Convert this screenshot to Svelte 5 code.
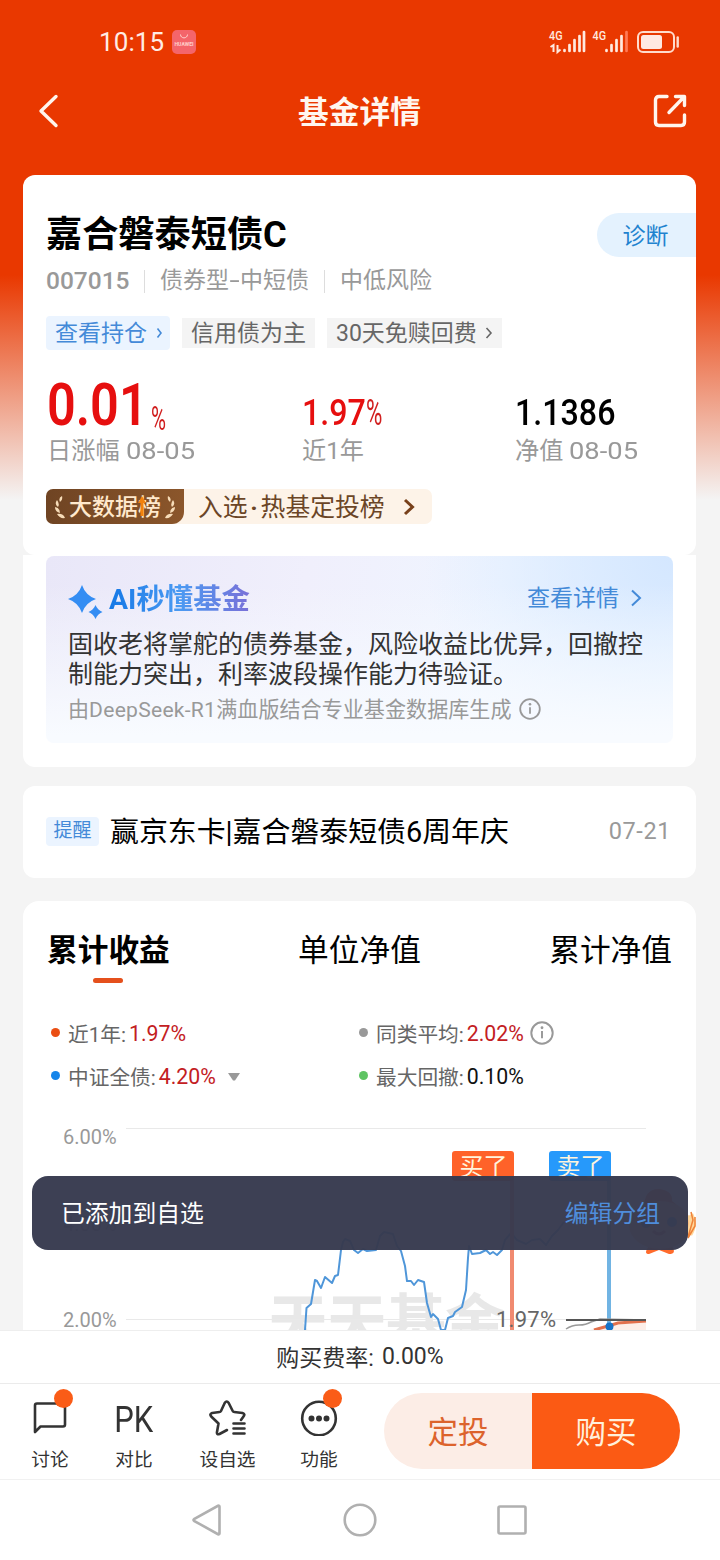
<script lang="ts">
  const tabs = ['累计收益', '单位净值', '累计净值'];
  let activeTab = $state(0);

  const legend = [
    { color: '#ea4e13', label: '近1年:', value: '1.97%', up: true },
    { color: '#999', label: '同类平均:', value: '2.02%', up: true, info: true },
    { color: '#1585ea', label: '中证全债:', value: '4.20%', up: true, more: true },
    { color: '#5fc463', label: '最大回撤:', value: '0.10%' }
  ];

  const bondIndex =
    '305,1330 306.5,1308 311,1304 313,1292 315,1280 317,1281 321,1288 325,1277 332,1283 335,1276 338,1275 341,1250 343,1242 345,1239 350,1241 354,1250 358,1253 363,1249 367,1251 376,1250 380,1236 384,1232 393,1234 397,1246 401,1251 405,1266 407,1281 411,1281 414,1285 418,1280 424,1282 427,1303 431,1317 433,1314 438,1319 441,1330 445,1330 448,1318 453,1316 455,1312 462,1307 466,1290 468,1258 469,1246 472,1254 480,1253 486,1250 490,1254 493,1252 497,1255 502,1250 505,1240 511,1233 517,1240 526,1244 532,1240 540,1239 546,1245 552,1236 558,1230 564,1222';
</script>

{#snippet info(size: number)}
  <svg class="info" width={size} height={size} viewBox="0 0 22 22">
    <circle cx="11" cy="11" r="9.8" />
    <path d="M11 9.2v6.6" />
    <circle class="tip" cx="11" cy="6.2" r="1.3" />
  </svg>
{/snippet}

<main>
  <div class="scroll">
    <header>
      <div class="status">
        <span class="time">10:15</span>
        <svg class="app" width="24" height="24" viewBox="0 0 24 24">
          <rect width="24" height="24" rx="5" fill="#f4656b" />
          <path d="M8.5 4.5c0 4.5 7 4.5 7 0" fill="none" stroke="#ffd0cc" stroke-width="1" />
          <text x="12" y="15.5" text-anchor="middle" textLength="19" lengthAdjust="spacingAndGlyphs">HUAWEI</text>
        </svg>
        <svg class="signal" width="132" height="28" viewBox="548 28 132 28">
          <g stroke="#ffe9df" stroke-width="2.7" stroke-linecap="round">
            <path d="M564.5 50v1M569.5 45v6M574.5 40v11M579.5 36v15M584 32v19" />
            <path d="M606.5 50v1M611.5 45v6M616.5 40v11M621.5 36v15" />
            <path d="M626.5 32v19" stroke="#ff7a55" />
          </g>
          <text x="549" y="40" textLength="13.5" lengthAdjust="spacingAndGlyphs">4G</text>
          <text x="592.5" y="40" textLength="13.5" lengthAdjust="spacingAndGlyphs">4G</text>
          <path d="M550.5 47l3-2v7M557.5 45v7l3-2.5" fill="none" stroke="#ffe9df" stroke-width="2" />
          <rect x="638" y="32" width="36" height="20" rx="5" fill="none" stroke="#ffdccc" stroke-width="2" />
          <rect x="641" y="35" width="21" height="14" rx="2.5" fill="#ffe9e2" />
          <path d="M677.7 37.5v9" stroke="#ffdccc" stroke-width="2.4" stroke-linecap="round" />
        </svg>
      </div>
      <div class="titlebar">
        <svg width="40" height="40" viewBox="0 0 40 40">
          <path d="M28 4.500L13 19l15 14.500" />
        </svg>
        <h1>基金详情</h1>
        <svg width="40" height="40" viewBox="0 0 40 40">
          <path d="M17 4.500H9Q5.500 4.500 5.500 8v22q0 3.500 3.500 3.500h22q3.500 0 3.500-3.500v-7M19 20.500L34 5M25.500 4.500h9v9" />
        </svg>
      </div>
    </header>

    <section class="card summary">
      <div class="name">
        <h2>嘉合磐泰短债C</h2>
        <button class="diagnose">诊断</button>
      </div>
      <div class="meta">
        <span class="code">007015</span><i></i><span>债券型<b>-</b>中短债</span><i></i><span>中低风险</span>
      </div>
      <div class="tags">
        <span class="tag blue">查看持仓<svg width="7" height="12" viewBox="0 0 7 12"><path d="M1.500 1.500l3.500 4.500-3.500 4.500" /></svg></span>
        <span class="tag">信用债为主</span>
        <span class="tag">30天免赎回费<svg width="8" height="12" viewBox="0 0 8 12"><path d="M1.500 1l4.500 5-4.500 5" /></svg></span>
      </div>
      <div class="stats">
        <div>
          <p class="figure red"><span class="big">0.01</span><span class="pct">%</span></p>
          <p class="caption">日涨幅 <span>08-05</span></p>
        </div>
        <div>
          <p class="figure red"><span class="mid">1.97</span><span class="pct2">%</span></p>
          <p class="caption">近1年</p>
        </div>
        <div>
          <p class="figure"><span class="mid">1.1386</span></p>
          <p class="caption">净值 <span>08-05</span></p>
        </div>
      </div>
      <div class="rank">
        <span class="badge">
          <svg width="12" height="24" viewBox="0 0 12 24">
            <path d="M8 1Q4 3 6 7Q9 5 8 1M3 5Q0 9 4 12Q6 9 3 5M1 12Q1 17 6 18Q6 13 1 12M3 19Q6 24 11 23Q9 18 3 19" />
          </svg>
          <span>大数据榜</span>
          <svg class="flip" width="12" height="24" viewBox="0 0 12 24">
            <path d="M8 1Q4 3 6 7Q9 5 8 1M3 5Q0 9 4 12Q6 9 3 5M1 12Q1 17 6 18Q6 13 1 12M3 19Q6 24 11 23Q9 18 3 19" />
          </svg>
          <svg class="arrow" width="8" height="20" viewBox="0 0 8 20"><path d="M4 0l4 7H5.500v13h-3V7H0z" /></svg>
        </span>
        <span class="rank-text">入选<b>·</b>热基定投榜</span>
        <svg width="12" height="18" viewBox="0 0 12 18"><path d="M2 2l7.500 7L2 16" /></svg>
      </div>
    </section>

    <section class="card ai-card">
      <div class="ai">
        <div class="ai-head">
          <svg width="36" height="36" viewBox="0 0 36 36">
            <path d="M14 1Q17.500 11.500 28 15Q17.500 18.500 14 29Q10.500 18.500 0 15Q10.500 11.500 14 1M27.500 21Q29.500 26 34.500 28Q29.500 30 27.500 35Q25.500 30 20.500 28Q25.500 26 27.500 21" />
          </svg>
          <h3>AI秒懂基金</h3>
          <a href="#detail">查看详情<svg width="12" height="18" viewBox="0 0 12 18"><path d="M2 1.500L10 9l-8 7.500" /></svg></a>
        </div>
        <p>固收老将掌舵的债券基金，风险收益比优异，回撤控制能力突出，利率波段操作能力待验证。</p>
        <small><span class="source">由<span>DeepSeek-R1</span>满血版结合专业基金数据库生成</span>{@render info(22)}</small>
      </div>
    </section>

    <section class="card notice">
      <span class="remind">提醒</span>
      <span class="notice-text">赢京东卡|嘉合磐泰短债6周年庆</span>
      <time>07-21</time>
    </section>

    <section class="card performance">
      <nav>
        {#each tabs as tab, i}
          <button class:active={activeTab === i} onclick={() => (activeTab = i)}>{tab}</button>
        {/each}
      </nav>
      <ul>
        {#each legend as item}
          <li>
            <i style:background={item.color}></i>{item.label}<em class:up={item.up}>{item.value}</em>
            {#if item.info}{@render info(24)}{/if}
            {#if item.more}<svg class="more" width="12" height="8" viewBox="0 0 12 8"><path d="M0 0h12L7 7.500H5z" /></svg>{/if}
          </li>
        {/each}
      </ul>
      <svg class="chart" width="673" height="230" viewBox="23 1100 673 230">
        <text class="watermark" x="268" y="1344" textLength="237">天天基金</text>
        <path d="M126 1128.500h520M126 1223.500h520M126 1319.500h520" stroke="#e9e9e9" />
        <text class="axis" x="63" y="1144">6.00%</text>
        <text class="axis" x="63" y="1231">4.00%</text>
        <text class="axis" x="63" y="1327">2.00%</text>
        <polyline points={bondIndex} fill="none" stroke="#4f96d9" stroke-width="2" stroke-linejoin="round" />
        <path d="M512 1175v155" stroke="#f08a70" stroke-width="4" />
        <path d="M609 1175v155" stroke="#71b4e3" stroke-width="4" />
        <rect x="452" y="1151" width="62" height="30" rx="3" fill="#ff6229" />
        <rect x="549" y="1151" width="62" height="30" rx="3" fill="#2699fb" />
        <text class="flag" x="459.500" y="1175">买了</text>
        <text class="flag" x="556.500" y="1175">卖了</text>
        <path d="M590 1330q15-5 27-5l29-4v9z" fill="#fdeee8" />
        <path d="M566 1329q6-4 13-4t12-3l9-3 46 1" fill="none" stroke="#999" stroke-width="1.500" />
        <path d="M594 1330l14-4 10-3 28-2" fill="none" stroke="#e2704c" stroke-width="3" />
        <path d="M566 1320h80" stroke="#555" stroke-width="2" />
        <circle cx="609.500" cy="1326.500" r="4" fill="#1673c8" />
        <text class="current" x="496" y="1327" textLength="60">1.97%</text>
        <!-- mascot -->
        <g>
          <path d="M649 1246q-6 8 0 8l10-4 10 4q8 0 3-8z" fill="#ff6b2c" />
          <path d="M644 1208q0-20 16-19 13 2 12 12 12 8 8 20z" fill="#f2622e" />
          <ellipse cx="660" cy="1225" rx="31" ry="24" fill="#ffb47c" />
          <circle cx="646" cy="1223" r="5" fill="#3473ba" />
          <circle cx="672" cy="1222" r="5" fill="#3473ba" />
          <path d="M653 1231q6 6 12 0" fill="none" stroke="#c23f1e" stroke-width="3" />
          <path d="M690 1215q5 9-1 19" fill="none" stroke="#ffd79a" stroke-width="7" />
          <path d="M691 1212l2 8-5 17M695 1217v9l-7 12" fill="none" stroke="#ef8238" stroke-width="1.500" />
        </g>
      </svg>
    </section>
  </div>

  <div class="toast"><span>已添加到自选</span><a href="#group">编辑分组</a></div>

  <div class="fee">购买费率: <span>0.00%</span></div>
  <div class="toolbar">
    <div class="tool">
      <svg width="38" height="36" viewBox="0 0 38 36">
        <path d="M4 32V5.500Q4 3.500 6 3.500h26q2 0 2 2v19q0 2-2 2H9.500z" />
      </svg>
      <span>讨论</span><b></b>
    </div>
    <div class="tool">
      <strong>PK</strong>
      <span>对比</span>
    </div>
    <div class="tool">
      <svg width="38" height="36" viewBox="0 0 38 36">
        <path d="M18 30L10.500 34Q7.500 35 8 32L9.500 23.500 2.200 16.500q-2-2.500 1-3.500L10.500 12q1 0 1.500-1L15.700 3q2-3 4 0L23.700 11q.5 1 1.500 1l8.300 1q3 1 1 3.500L32 20" />
        <path d="M24.500 23.500h11M24.500 28.500h11M24.500 33.500h11" />
      </svg>
      <span>设自选</span>
    </div>
    <div class="tool">
      <svg width="38" height="36" viewBox="0 0 38 36">
        <circle cx="19" cy="18.500" r="16.800" />
        <path class="dots" d="M11.500 18.500h0M19 18.500h0M26.500 18.500h0" />
      </svg>
      <span>功能</span><b></b>
    </div>
    <div class="trade">
      <button>定投</button>
      <button class="buy">购买</button>
    </div>
  </div>
  <div class="system">
    <svg width="34" height="34" viewBox="0 0 34 34"><path d="M3 16.200q-1 .8 0 1.600L27 31.200q1.500.5 1.500-1V3.800q0-1.500-1.500-1z" /></svg>
    <svg width="34" height="34" viewBox="0 0 34 34"><circle cx="17" cy="17" r="15.300" /></svg>
    <svg width="34" height="34" viewBox="0 0 34 34"><rect x="3.500" y="3.500" width="27" height="27" rx="1.500" /></svg>
  </div>
</main>

<style>
  :global(body) {
    margin: 0;
  }

  main {
    position: relative;
    width: 720px;
    height: 1560px;
    display: flex;
    flex-direction: column;
    overflow: hidden;
    background: #fff;
    color: #000;
    font-family: Roboto, 'Noto Sans CJK SC', sans-serif;
  }

  main * {
    box-sizing: border-box;
  }

  h1, h2, h3, p, ul {
    margin: 0;
    padding: 0;
  }

  button {
    border: 0;
    padding: 0;
    background: none;
    font-family: inherit;
    color: inherit;
  }

  a {
    text-decoration: none;
  }

  svg {
    display: block;
    flex: none;
  }

  .scroll {
    height: 1330px;
    overflow: hidden;
    background: linear-gradient(#e93800 0, #e93800 275px, #f4f4f4 500px);
  }

  .status {
    display: flex;
    align-items: center;
    height: 84px;
    padding: 0 40px 0 99px;
  }

  .time {
    width: 73px;
    font-size: 26px;
    color: #ffece5;
    letter-spacing: 0.1px;
  }

  .app text {
    font-size: 5px;
    font-weight: 700;
    fill: #ffd0cc;
  }

  .signal {
    margin-left: auto;
  }

  .signal text {
    font-size: 13px;
    font-weight: 500;
    fill: #ffe9df;
  }

  .titlebar {
    display: flex;
    align-items: center;
    justify-content: space-between;
    height: 56px;
    padding: 0 30px 0 28px;
    margin-bottom: 35px;
  }

  .titlebar svg {
    fill: none;
    stroke: #fff5ed;
    stroke-width: 3.4;
    stroke-linecap: round;
    stroke-linejoin: round;
  }

  h1 {
    padding: 2px 0 0 1px;
    font-size: 30.7px;
    line-height: 40px;
    color: #fff6ef;
  }

  .card {
    margin: 0 24px 0 23px;
    background: #fff;
    border-radius: 12px;
  }

  .summary {
    height: 380px;
    padding: 37px 0 0 23px;
  }

  .name {
    display: flex;
    justify-content: space-between;
    align-items: center;
    height: 46px;
  }

  h2 {
    font-size: 36.2px;
    line-height: 46px;
  }

  .diagnose {
    width: 99px;
    height: 44px;
    padding: 0 2px 3px 0;
    border-radius: 22px 0 0 22px;
    background: #e4f2fe;
    color: #1f83cf;
    font-size: 23px;
  }

  .meta {
    display: flex;
    align-items: center;
    height: 30px;
    margin-top: 8px;
    font-size: 23px;
    line-height: 28px;
    color: #999;
  }

  .meta i {
    width: 1px;
    height: 23px;
    margin: 0 15px;
    background: #ddd;
  }

  .meta b {
    display: inline-block;
    width: 11px;
    text-align: center;
    font-weight: 400;
    transform: scaleX(1.6);
  }

  .meta .code {
    width: 83px;
    font-size: 24.5px;
    font-weight: 500;
  }

  .tags {
    display: flex;
    align-items: center;
    gap: 12px;
    height: 34px;
    margin-top: 20px;
  }

  .tag {
    display: flex;
    align-items: center;
    height: 30px;
    padding: 0 9px;
    background: #f4f4f4;
    color: #666;
    font-size: 23px;
    line-height: 27px;
    white-space: nowrap;
  }

  .tag svg {
    margin: 0 0 0 8px;
    fill: none;
    stroke: currentColor;
    stroke-width: 1.6;
  }

  .tag.blue {
    height: 34px;
    padding: 0 7px 0 9px;
    border-radius: 4px;
    background: #ebf4ff;
    color: #448ad8;
  }

  .tag.blue svg {
    margin-left: 9px;
  }

  .stats {
    display: grid;
    grid-template-columns: 255px 213px 1fr;
    height: 122px;
    margin-top: 23px;
  }

  .figure {
    display: flex;
    align-items: flex-end;
    height: 62px;
    line-height: 1;
    font-weight: 500;
    padding-left: 1px;
  }

  .red {
    color: #e60f0f;
  }

  .big {
    width: 104px;
    font-size: 60px;
    line-height: 50px;
    height: 55px;
    font-weight: 600;
    transform: scaleX(0.84);
    transform-origin: 0 0;
  }

  .pct,
  .pct2 {
    width: 16px;
    font-size: 33px;
    font-weight: 400;
    line-height: 34px;
    color: #d11f1f;
    transform: scaleX(0.62);
    transform-origin: 0 0;
  }

  .pct {
    height: 33px;
  }

  .mid {
    font-size: 37px;
    line-height: 38px;
    height: 41px;
    transform: scaleX(0.87);
    transform-origin: 0 0;
  }

  .pct2 {
    font-size: 36px;
    height: 39px;
    margin-left: -9px;
  }

  .caption {
    padding-left: 1px;
    margin-top: -1px;
    font-size: 24.2px;
    line-height: 34px;
    color: #999;
    white-space: nowrap;
  }

  .caption span {
    display: inline-block;
    transform: scaleX(1.13);
    transform-origin: 0 0;
  }

  .rank {
    display: flex;
    align-items: center;
    width: 386px;
    height: 35px;
    margin-top: -6px;
    border-radius: 7px;
    background: #fdf3e8;
    color: #6b4526;
  }

  .badge {
    position: relative;
    display: flex;
    align-items: center;
    justify-content: space-between;
    width: 138px;
    height: 35px;
    padding: 0 8px;
    border-radius: 7px 0 12px 7px;
    background: linear-gradient(90deg, #6f4423, #8b562b);
    color: #ffe9cd;
    font-size: 23px;
    font-weight: 500;
    white-space: nowrap;
  }

  .badge span {
    margin-top: -3px;
  }

  .badge svg {
    fill: #f7dcb8;
  }

  .badge .flip {
    transform: scaleX(-1);
  }

  .badge .arrow {
    position: absolute;
    left: 92px;
    top: 7px;
    fill: #f3820d;
  }

  .rank-text {
    margin: -3px 18px 0 14px;
    font-size: 24.8px;
    white-space: nowrap;
  }

  .rank-text b {
    display: inline-block;
    width: 13px;
    text-align: center;
  }

  .rank > svg {
    fill: none;
    stroke: #78401a;
    stroke-width: 3;
  }

  .ai-card {
    height: 212px;
    padding: 1px 23px 0;
    border-radius: 0 0 12px 12px;
  }

  .ai {
    height: 187px;
    padding: 22px 22px 0;
    border-radius: 8px;
    background:
      linear-gradient(to bottom, transparent 15%, #f8fbff 96%),
      radial-gradient(circle at 100% 0, #d4e7ff 0, transparent 38%),
      linear-gradient(100deg, #e9e7f8, #f0effc 40%, #eff5ff 70%, #e9f3ff);
  }

  .ai-head {
    display: flex;
    align-items: center;
    height: 44px;
  }

  .ai-head > svg {
    margin: 3px 5px 0 0;
    fill: #348df3;
  }

  h3 {
    font-size: 28.4px;
    line-height: 40px;
    color: transparent;
    background: linear-gradient(90deg, #1478e6, #4b9af2 50%, #7a70d8);
    background-clip: text;
  }

  .ai-head a {
    display: flex;
    align-items: center;
    gap: 11px;
    margin: -8px 9px 0 auto;
    font-size: 23px;
    color: #448ad8;
  }

  .ai-head a svg {
    margin-top: 3px;
    fill: none;
    stroke: currentColor;
    stroke-width: 2;
  }

  .ai p {
    width: 580px;
    margin-top: 8px;
    font-size: 25px;
    line-height: 29.5px;
    color: #333;
  }

  small {
    display: flex;
    align-items: center;
    gap: 7px;
    height: 30px;
    margin-top: 5px;
    font-size: 21.1px;
    color: #999;
    white-space: nowrap;
  }

  .source {
    margin-top: -2px;
  }

  .source span {
    letter-spacing: 0.25px;
  }

  .info {
    fill: none;
    stroke: #999;
    stroke-width: 1.8;
  }

  .info .tip {
    fill: #999;
    stroke: none;
  }

  .notice {
    display: flex;
    align-items: center;
    height: 92px;
    margin-top: 19px;
    padding: 0 25px 2px 23px;
  }

  .remind {
    width: 53px;
    height: 29px;
    border-radius: 4px;
    background: #ebf4ff;
    color: #448ad8;
    font-size: 19px;
    line-height: 28px;
    text-align: center;
  }

  .notice-text {
    margin: -4px 0 0 11px;
    font-size: 28.9px;
    white-space: nowrap;
  }

  time {
    margin-left: auto;
    font-size: 23.5px;
    letter-spacing: 0.6px;
    color: #999;
  }

  .performance {
    height: 440px;
    margin-top: 23px;
    padding-top: 29px;
    border-radius: 16px 16px 0 0;
  }

  nav {
    display: flex;
    justify-content: space-between;
    padding: 0 24px;
  }

  nav button {
    position: relative;
    height: 58px;
    padding-bottom: 16px;
    font-size: 30.7px;
    line-height: 42px;
  }

  nav .active {
    font-weight: 700;
  }

  nav .active::after {
    content: '';
    position: absolute;
    left: 46px;
    bottom: 5px;
    width: 30px;
    height: 5px;
    border-radius: 3px;
    background: #e5501c;
  }

  ul {
    display: grid;
    grid-template-columns: 308px 1fr;
    grid-auto-rows: 43px;
    height: 112px;
    padding: 23px 0 0 28px;
    list-style: none;
  }

  li {
    display: flex;
    align-items: center;
    font-size: 20.7px;
    color: #666;
    white-space: nowrap;
  }

  li i {
    width: 9px;
    height: 9px;
    margin: -1px 8px 0 0;
    border-radius: 50%;
  }

  em {
    margin: 2px 0 0 3px;
    font-size: 21.3px;
    font-style: normal;
    color: #111;
  }

  em.up {
    color: #c3201f;
  }

  li .info {
    margin-left: 6px;
  }

  .more {
    margin: 2px 0 0 12px;
    fill: #999;
  }

  .watermark {
    font-size: 60px;
    font-weight: 700;
    fill: #e8e8e8;
  }

  .axis {
    font-size: 20px;
    fill: #999;
  }

  .current {
    font-size: 22px;
    fill: #666;
  }

  .flag {
    font-size: 24px;
    fill: #fff4dc;
  }

  .toast {
    position: absolute;
    left: 32px;
    top: 1176px;
    width: 656px;
    height: 74px;
    display: flex;
    align-items: center;
    justify-content: space-between;
    padding: 0 28px 4px 29px;
    border-radius: 16px;
    background: rgba(55, 58, 78, 0.97);
    color: #fff;
    font-size: 23.8px;
  }

  .toast a {
    color: #4f8ddb;
  }

  .fee {
    display: flex;
    justify-content: center;
    align-items: center;
    gap: 8px;
    height: 54px;
    padding-bottom: 3px;
    border-top: 1px solid #eee;
    border-bottom: 1px solid #ebebeb;
    font-size: 23px;
    color: #333;
  }

  .fee span {
    margin-top: 2px;
  }

  .toolbar {
    display: flex;
    height: 96px;
    padding-top: 9px;
    border-bottom: 1px solid #f1f1f1;
  }

  .tool {
    position: relative;
    display: flex;
    flex-direction: column;
    align-items: center;
    width: 84px;
    margin-left: 8px;
    padding-top: 7px;
    color: #333;
    font-size: 18.7px;
    line-height: 28px;
  }

  .tool + .tool {
    margin-left: 0;
  }

  .tool:nth-child(3) {
    width: 103px;
  }

  .tool:nth-child(4) {
    width: 80px;
  }

  .tool svg {
    fill: none;
    stroke: #333;
    stroke-width: 2.6;
    stroke-linecap: round;
    stroke-linejoin: round;
  }

  .tool .dots {
    stroke-width: 6;
  }

  .tool strong {
    height: 36px;
    font-size: 36px;
    font-weight: 400;
    line-height: 40px;
    transform: scaleX(0.86);
  }

  .tool span {
    margin-top: 10px;
  }

  .tool b {
    position: absolute;
    right: 19px;
    top: -4px;
    width: 19px;
    height: 19px;
    border-radius: 50%;
    background: #fa5c17;
  }

  .tool:nth-child(4) b {
    right: 17px;
  }

  .trade {
    display: flex;
    width: 296px;
    height: 76px;
    margin: 0 40px 0 auto;
    border-radius: 38px;
    overflow: hidden;
  }

  .trade button {
    flex: 1;
    padding-bottom: 3px;
    background: #fcede6;
    color: #dc632c;
    font-size: 30.5px;
  }

  .trade .buy {
    background: #fb5a14;
    color: #fff0dc;
  }

  .system {
    display: flex;
    justify-content: center;
    align-items: center;
    gap: 118px;
    height: 80px;
  }

  .system svg {
    fill: none;
    stroke: #b0b0b0;
    stroke-width: 2.6;
  }
</style>
